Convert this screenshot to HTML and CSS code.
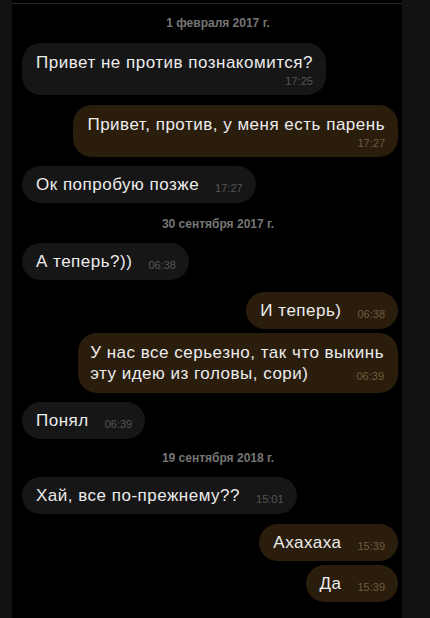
FILE: index.html
```html
<!DOCTYPE html>
<html lang="ru">
<head>
<meta charset="UTF-8" />
<meta name="viewport" content="width=device-width, initial-scale=1" />
<title>Переписка</title>
<link rel="stylesheet" href="styles.css">
</head>
<body>
  <div class="screen" role="main" aria-label="Переписка">
    <div class="chat">
      <div class="date date-first">1 февраля 2017 г.</div>

      <div class="msg in stack">
        <span class="text">Привет не против познакомится?</span>
        <span class="time">17:25</span>
      </div>
      <div class="msg out stack">
        <span class="text">Привет, против, у меня есть парень</span>
        <span class="time">17:27</span>
      </div>
      <div class="msg in close">
        <span class="text">Ок попробую позже</span>
        <span class="time">17:27</span>
      </div>

      <div class="date">30 сентября 2017 г.</div>

      <div class="msg in">
        <span class="text">А теперь?))</span>
        <span class="time">06:38</span>
      </div>
      <div class="msg out wide-gap">
        <span class="text">И теперь)</span>
        <span class="time">06:38</span>
      </div>
      <div class="msg out tail overlay">
        <span class="text">У нас все серьезно, так что выкинь<br>эту идею из головы, сори)</span>
        <span class="time">06:39</span>
      </div>
      <div class="msg in close">
        <span class="text">Понял</span>
        <span class="time">06:39</span>
      </div>

      <div class="date date-tight">19 сентября 2018 г.</div>

      <div class="msg in">
        <span class="text">Хай, все по-прежнему??</span>
        <span class="time">15:01</span>
      </div>
      <div class="msg out">
        <span class="text">Ахахаха</span>
        <span class="time">15:39</span>
      </div>
      <div class="msg out tail">
        <span class="text">Да</span>
        <span class="time">15:39</span>
      </div>
    </div>
  </div>
</body>
</html>
```

FILE: styles.css
```css
*, *::before, *::after {
  box-sizing: border-box;
}
body {
  margin: 0;
  background: #121212;
  font-family: 'Liberation Sans', Arial, sans-serif;
  height: 618px;
  overflow: hidden;
}
.screen {
  margin-left: 12px;
  width: 390px;
  height: 618px;
  background: #000;
  padding-top: 3px;
}
.chat {
  border-top: 1px solid #242424;
  display: flex;
  flex-direction: column;
  align-items: flex-start;
  padding: 0 4px 0 10px;
}
.date {
  align-self: center;
  margin: 14px 0 12px 16px;
  font-size: 12px;
  font-weight: 700;
  color: #767676;
  line-height: 14px;
}
.date-first {
  margin-top: 12px;
  margin-bottom: 13px;
}
.date-tight {
  margin-top: 12px;
}
.msg {
  display: flex;
  align-items: flex-end;
  padding: 8px 13px 8px 14px;
  border-radius: 19px;
  color: #ececec;
  font-size: 17px;
  letter-spacing: 0.5px;
  line-height: 21px;
  margin-top: 10px;
}
.date + .msg {
  margin-top: 0;
}
.msg.close {
  margin-top: 9px;
}
.msg.wide-gap {
  margin-top: 12px;
}
.msg.tail {
  margin-top: 4px;
}
.msg.in {
  background: #161616;
}
.msg.out {
  align-self: flex-end;
  background: #2a1d0c;
}
.time {
  font-size: 11px;
  letter-spacing: 0;
  line-height: 14px;
  margin-left: 16px;
  color: #555;
}
.msg.out .time {
  color: #6e5c3e;
}
.msg.stack {
  flex-direction: column;
  align-items: flex-end;
  padding-top: 9px;
  padding-bottom: 7px;
}
.msg.stack .text {
  align-self: flex-start;
}
.msg.stack .time {
  margin-left: 0;
  margin-top: 1px;
}
/* time sits in the free space of the last line */
.msg.overlay {
  display: grid;
  padding: 9px 14px 9px 12px;
}
.msg.overlay .text,
.msg.overlay .time {
  grid-area: 1 / 1;
}
.msg.overlay .time {
  justify-self: end;
  align-self: end;
  margin-bottom: 1px;
}
```
